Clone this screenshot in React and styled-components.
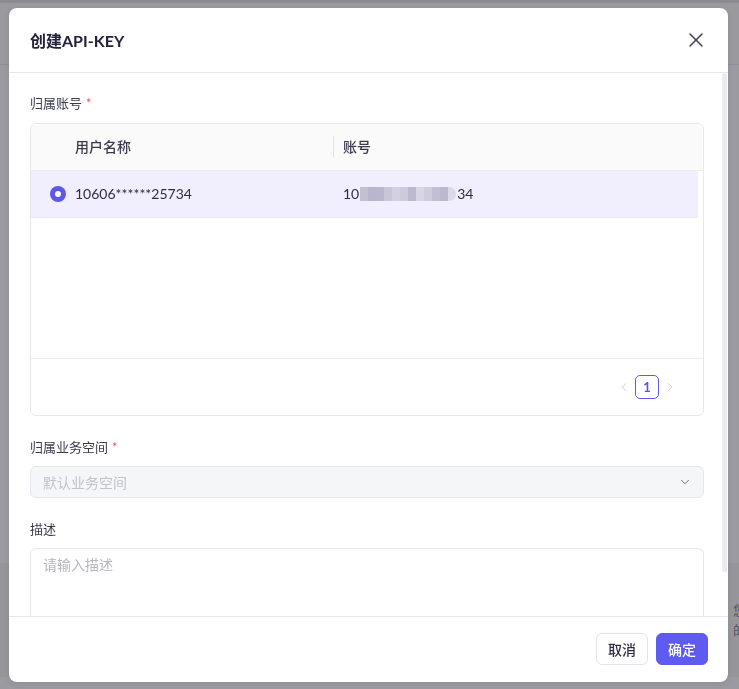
import React from 'react';
import styled, { createGlobalStyle } from 'styled-components';
import { X, ChevronDown, ChevronLeft, ChevronRight } from 'lucide-react';

const GlobalStyle = createGlobalStyle`
  html, body {
    margin: 0;
    padding: 0;
    height: 100%;
  }
  body {
    font-family: Lato, 'Noto Sans CJK SC', sans-serif;
    background: #99989d;
    overflow: hidden;
  }
  * {
    box-sizing: border-box;
  }
`;

// page behind the mask
const Page = styled.div`
  height: 689px;
  display: flex;
  flex-direction: column;
`;

const PageTop = styled.div`
  height: 65px;
  border-top: 3px solid #8c8b90;
  border-bottom: 1px solid #8f8e93;
  background: #9a999e;
`;

const PageMain = styled.div`
  flex: 1;
  background: #9b9aa0;
`;

const PageNotice = styled.div`
  height: 114px;
  background: #969599;
  display: grid;
  grid-template-columns: 733px 1fr;
  align-content: center;
  font-size: 13px;
  line-height: 20px;
  color: #55545a;
  white-space: nowrap;
`;

const PageBottom = styled.div`
  height: 12px;
  background: #9b9aa0;
`;

const Overlay = styled.div`
  position: fixed;
  inset: 0;
  display: flex;
  align-items: center;
  justify-content: center;
  padding-right: 2px;
`;

const Modal = styled.div`
  width: 719px;
  height: 674px;
  background: #fff;
  border-radius: 8px;
  display: flex;
  flex-direction: column;
  overflow: hidden;
  box-shadow: 0 2px 6px rgba(0, 0, 0, 0.08);
`;

const Header = styled.div`
  height: 65px;
  flex-shrink: 0;
  display: flex;
  align-items: center;
  justify-content: space-between;
  padding: 0 20px 0 21px;
  border-bottom: 1px solid #e6e6ec;
`;

const Title = styled.h2`
  margin: 0;
  font-size: 16px;
  font-weight: 700;
  color: #24223a;
`;

const CloseButton = styled.button`
  display: flex;
  align-items: center;
  justify-content: center;
  width: 24px;
  height: 24px;
  padding: 0;
  border: none;
  background: transparent;
  color: #3b3a52;
  cursor: pointer;
`;

const BodyWrap = styled.div`
  flex: 1;
  position: relative;
  overflow: hidden;
`;

const Body = styled.div`
  height: 100%;
  overflow: hidden;
  padding: 20px 24px 24px 21px;
`;

const ScrollThumb = styled.div`
  position: absolute;
  top: 0;
  right: 1px;
  width: 5px;
  height: 499px;
  border-radius: 3px;
  background: #ebebef;
`;

const FormItem = styled.div`
  margin-bottom: ${p => p.last ? '0' : '21px'};
`;

const Label = styled.div`
  font-size: 13px;
  line-height: 20px;
  color: #3b3a4e;
  margin-bottom: ${p => p.tight ? '9px' : '10px'};

  span {
    color: #f0565a;
    margin-left: 4px;
  }
`;

const Table = styled.div`
  border: 1px solid #e7e7ec;
  border-radius: 6px;
  overflow: hidden;
`;

const HeadRow = styled.div`
  display: grid;
  grid-template-columns: 44px 258px 1fr;
  height: 47px;
  align-items: center;
  background: #fafafa;
  border-bottom: 1px solid #ececf1;
  font-size: 14px;
  font-weight: 500;
  color: #3b3a4e;
`;

const HeadCell = styled.div`
  padding-left: ${p => p.divided ? '9px' : '0'};
  border-left: ${p => p.divided ? '1px solid #e3e3e8' : 'none'};
  line-height: 21px;
`;

const TableBody = styled.div`
  height: 188px;
  padding-right: 5px;
  border-bottom: 1px solid #ececf1;
`;

const Row = styled.div`
  display: grid;
  grid-template-columns: 44px 258px 1fr;
  height: 47px;
  align-items: center;
  background: ${p => p.selected ? '#f1effd' : '#fff'};
  border-bottom: 1px solid #ebeaf2;
  font-size: 14px;
  color: #2f2d45;
`;

const RadioCell = styled.div`
  padding-left: 19px;
  display: flex;
  align-items: center;
`;

const Radio = styled.span`
  width: 16px;
  height: 16px;
  border-radius: 50%;
  background: ${p => p.checked ? '#5d57ea' : '#fff'};
  border: ${p => p.checked ? 'none' : '1px solid #d0d0d8'};
  display: flex;
  align-items: center;
  justify-content: center;

  &::after {
    content: '';
    width: 6px;
    height: 6px;
    border-radius: 50%;
    background: #fff;
  }
`;

const AccountCell = styled.div`
  padding-left: 10px;
  display: flex;
  align-items: center;
`;

const Mosaic = styled.span`
  display: inline-flex;
  height: 14px;
  margin: 0 1px;
  border-radius: 0 7px 7px 0;
  overflow: hidden;
`;

const MosaicBlock = styled.span`
  width: 8px;
  height: 100%;
  background: ${p => p.tone};
`;

const Pager = styled.div`
  height: 56px;
  display: flex;
  align-items: center;
  justify-content: flex-end;
  gap: 4px;
  padding-right: 26px;
`;

const PagerArrow = styled.span`
  display: flex;
  align-items: center;
  color: #c6c5ce;
`;

const PageNum = styled.span`
  width: 24px;
  height: 24px;
  display: flex;
  align-items: center;
  justify-content: center;
  border: 1px solid #605bea;
  border-radius: 5px;
  font-size: 13px;
  font-weight: 700;
  color: #5a55e6;
`;

const Select = styled.div`
  height: 32px;
  display: flex;
  align-items: center;
  justify-content: space-between;
  padding: 0 11px 0 12px;
  background: #f5f6f8;
  border: 1px solid #e6e6ec;
  border-radius: 6px;
  font-size: 14px;
  color: #c3c2cb;
`;

const SelectIcon = styled.span`
  display: flex;
  color: #5a596c;
`;

const TextArea = styled.textarea`
  display: block;
  width: 100%;
  height: 88px;
  padding: 5px 12px;
  border: 1px solid #e6e6ec;
  border-radius: 6px;
  font-family: inherit;
  font-size: 14px;
  line-height: 22px;
  color: #2f2d45;
  resize: vertical;
  outline: none;

  &::placeholder {
    color: #b7b6c0;
  }
`;

const Footer = styled.div`
  height: 66px;
  flex-shrink: 0;
  display: flex;
  align-items: center;
  justify-content: flex-end;
  gap: 8px;
  padding: 0 20px;
  border-top: 1px solid #e6e6ec;
`;

const Button = styled.button`
  height: 32px;
  width: 52px;
  padding: 0;
  border-radius: 6px;
  font-family: inherit;
  font-size: 14px;
  font-weight: 500;
  cursor: pointer;
  border: 1px solid ${p => p.primary ? '#605bf0' : '#e3e3e9'};
  background: ${p => p.primary ? '#605bf0' : '#fff'};
  color: ${p => p.primary ? '#fff' : '#2f2d45'};
`;

const mosaicTones = [
  '#c4c0d4', '#b9b5cc', '#bab6cd', '#c9c6da', '#d3d0e2', '#cdcadc',
  '#bdb9cf', '#d8d5e5', '#cfcce0', '#c2bed3', '#bcb8ce', '#dcd9e8',
];

export default function App() {
  return (
    <>
      <GlobalStyle />
      <Page>
        <PageTop />
        <PageMain />
        <PageNotice>
          <span />
          <span>您的<br />的框</span>
        </PageNotice>
        <PageBottom />
      </Page>
      <Overlay>
        <Modal>
          <Header>
            <Title>创建API-KEY</Title>
            <CloseButton aria-label="关闭">
              <X size={24} strokeWidth={1.4} />
            </CloseButton>
          </Header>
          <BodyWrap>
            <Body>
              <FormItem>
                <Label>归属账号<span>*</span></Label>
                <Table>
                  <HeadRow>
                    <div />
                    <HeadCell>用户名称</HeadCell>
                    <HeadCell divided>账号</HeadCell>
                  </HeadRow>
                  <TableBody>
                    <Row selected>
                      <RadioCell><Radio checked /></RadioCell>
                      <div>10606******25734</div>
                      <AccountCell>
                        10
                        <Mosaic>
                          {mosaicTones.map((tone, i) => (
                            <MosaicBlock key={i} tone={tone} />
                          ))}
                        </Mosaic>
                        34
                      </AccountCell>
                    </Row>
                  </TableBody>
                  <Pager>
                    <PagerArrow><ChevronLeft size={14} strokeWidth={1.5} /></PagerArrow>
                    <PageNum>1</PageNum>
                    <PagerArrow><ChevronRight size={14} strokeWidth={1.5} /></PagerArrow>
                  </Pager>
                </Table>
              </FormItem>
              <FormItem>
                <Label tight>归属业务空间<span>*</span></Label>
                <Select>
                  默认业务空间
                  <SelectIcon><ChevronDown size={14} strokeWidth={1.5} /></SelectIcon>
                </Select>
              </FormItem>
              <FormItem last>
                <Label tight>描述</Label>
                <TextArea placeholder="请输入描述" />
              </FormItem>
            </Body>
            <ScrollThumb />
          </BodyWrap>
          <Footer>
            <Button>取消</Button>
            <Button primary>确定</Button>
          </Footer>
        </Modal>
      </Overlay>
    </>
  );
}
